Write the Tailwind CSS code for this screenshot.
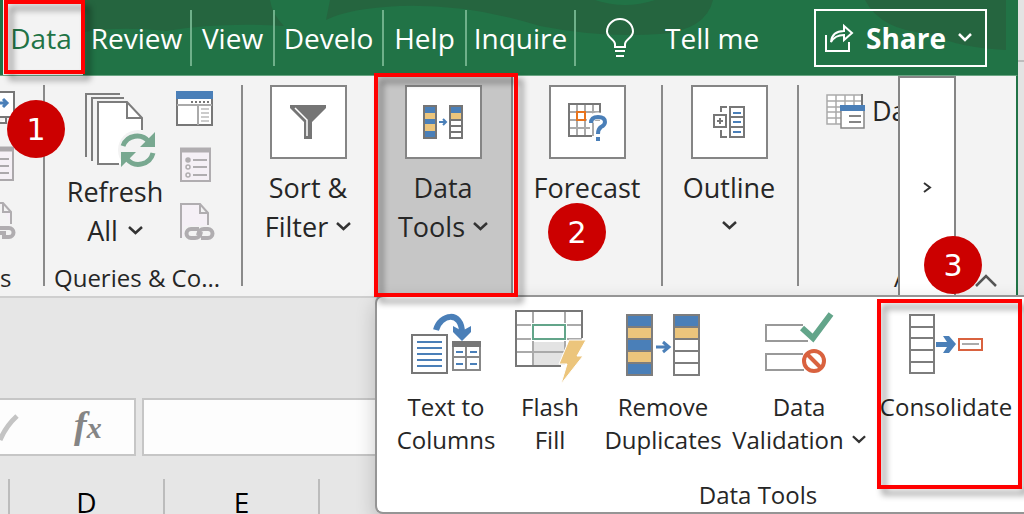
<!DOCTYPE html>
<html lang="en">

<head>
    <meta charset="UTF-8">
    <meta name="viewport" content="width=device-width, initial-scale=1.0">
    <title>Data Tools - Consolidate</title>
    <script src="https://cdn.jsdelivr.net/npm/@tailwindcss/browser@4"></script>
</head>

<body class="relative h-screen overflow-hidden bg-[#e6e6e6] font-['Open_Sans','Noto_Sans',sans-serif] text-[#262626]">
    <div class="flex">
        <div class="flex-1 min-w-0">
            <!-- Tab bar -->
            <header class="relative h-[75px] bg-[#217346] text-white text-[28px] leading-[40px]">
                <svg class="absolute inset-0 w-full h-full" viewBox="0 0 1018 75" preserveAspectRatio="none" fill="#25653f">
                    <path d="M84 0H270Q272 14 284 26Q220 22 166 31Q120 26 84 32Z" />
                    <path d="M330 0H595Q625 10 655 0H713Q706 30 660 34Q600 38 540 26Q470 4 400 6Q350 8 326 20Z" />
                    <path d="M865 0H1006V50Q960 48 930 34Q880 30 865 0Z" />
                </svg>
                <nav class="relative flex items-center h-full pl-[3px]">
                    <button class="w-[80px] h-full bg-[#f3f3f3] text-[#217346] pr-1">Data</button>
                    <button class="w-[109px] h-[56px] border-r-2 border-[#6fb08a]">Review</button>
                    <button class="w-[83px] h-[56px] border-r-2 border-[#6fb08a]">View</button>
                    <button class="w-[109px] h-[56px] border-r-2 border-[#6fb08a]">Develo</button>
                    <button class="w-[83px] h-[56px] border-r-2 border-[#6fb08a]">Help</button>
                    <button class="w-[109px] h-[56px] border-r-2 border-[#6fb08a]">Inquire</button>
                    <button class="flex items-center gap-[30px] ml-[29px]">
                        <svg class="w-[30px] h-[40px]" viewBox="0 0 30 40" fill="none" stroke="#fff" stroke-width="2">
                            <path d="M10 29V26C10 21 2 20 2 13.500A13 12.500 0 0 1 28 13.500C28 20 20 21 20 26V29ZM10 33H20M11 38H19" />
                        </svg>
                        <span>Tell me</span>
                    </button>
                    <button class="ml-auto mr-[31px] w-[173px] h-[58px] border-2 border-white flex items-center gap-[12px] pl-[9px] font-bold">
                        <svg class="w-[29px] h-[30px]" viewBox="0 0 29 30" fill="none" stroke="#fff" stroke-width="2">
                            <path d="M1 12V28H24V19M6 19Q7 8 19 8V3L27 10L19 17V12Q10 12 6 19Z" />
                        </svg>
                        <span>Share</span>
                        <svg class="w-[14px] h-[9px]" viewBox="0 0 14 9" fill="none" stroke="#fff" stroke-width="2.500">
                            <path d="M1 1L7 7L13 1" />
                        </svg>
                    </button>
                </nav>
            </header>

            <!-- Ribbon -->
            <main class="flex h-[223px] bg-[#f3f3f3] border-t border-t-[#6aa583] border-b-2 border-b-[#cfcfcf] border-r-2 border-r-[#217346] text-[27px] leading-[39px]">
                <section class="w-[43px] pt-[15px]">
                    <div class="flex flex-col gap-[20px]">
                        <svg class="w-[18px] h-[35px]" viewBox="0 0 18 35" fill="none" stroke="#777" stroke-width="2">
                            <path d="M0 1H14V26H0M0 32H6V27" fill="#fff" />
                            <path d="M0 12H7M3 8L7 12L3 16" stroke="#4a7fb8" stroke-width="3" />
                        </svg>
                        <svg class="w-[18px] h-[36px]" viewBox="0 0 18 36" fill="none" stroke="#aba8ab" stroke-width="2">
                            <path d="M0 2H13V34H0" fill="#f5f0f6" />
                            <path d="M0 3H14" stroke-width="5" />
                            <path d="M0 13H9M0 20H9M0 27H9" />
                        </svg>
                        <svg class="w-[18px] h-[38px]" viewBox="0 0 18 38" fill="none" stroke="#b0adb0" stroke-width="2">
                            <path d="M0 1H3L11 10V22M3 1V10H11" fill="#f5f0f6" />
                            <path d="M0 26H9A4 4 0 0 1 9 35H2M0 31H6" stroke-width="4" />
                        </svg>
                    </div>
                    <p class="mt-[22px] text-[24px] leading-[32px]">s</p>
                </section>
                <div class="w-[2px] h-[201px] mt-[9px] bg-[#8a8a8a]"></div>

                <section class="w-[196px] pt-[15px]">
                    <div class="flex h-[171px] pl-[10px]">
                        <button class="w-[120px] flex flex-col items-center">
                            <svg class="w-[72px] h-[76px] self-end mr-[18px]" viewBox="0 0 72 76" fill="none" stroke="#7d7d7d" stroke-width="2">
                                <path d="M1 66V3H35M7 70V7H39" />
                                <path d="M13 11H42L57 27V73H13Z" fill="#fff" stroke="none" />
                                <path d="M34 73H13V11H42L57 27V39M42 11V27H57" />
                                <circle cx="53" cy="59" r="20" fill="#f3f3f3" stroke="none" />
                                <g stroke="#78a890" stroke-width="5">
                                    <path d="M38 55A15 15 0 0 1 64 51M68 62A15 15 0 0 1 42 68" />
                                </g>
                                <path d="M70 41V56H55ZM36 76V61H51Z" fill="#78a890" stroke="none" />
                            </svg>
                            <span class="mt-[5px]">Refresh</span>
                            <span class="flex items-center gap-[10px]">All
                                <svg class="w-[15px] h-[9px]" viewBox="0 0 15 9" fill="none" stroke="#333" stroke-width="2.500">
                                    <path d="M1 1L7.500 7L14 1" />
                                </svg>
                            </span>
                        </button>
                        <div class="flex flex-col gap-[20px]">
                            <button aria-label="Queries pane">
                                <svg class="w-[38px] h-[36px]" viewBox="0 0 38 36" fill="none">
                                    <path d="M2 1H37V34H2Z" fill="#fff" stroke="#777" stroke-width="2" />
                                    <path d="M1 0H38V8H1Z" fill="#4a7fb8" />
                                    <path d="M2 14H37M23 14V34" stroke="#aaa" stroke-width="2" />
                                    <path d="M16 11H34" stroke="#777" stroke-width="2" stroke-dasharray="2 2" />
                                    <path d="M26 18H34M26 22H34M26 26H34M26 30H34" stroke="#999" />
                                </svg>
                            </button>
                            <button aria-label="Properties">
                                <svg class="w-[38px] h-[36px]" viewBox="0 0 38 36" fill="none" stroke="#b0adb0" stroke-width="2">
                                    <path d="M6 2H35V34H6Z" fill="#f5f0f6" />
                                    <path d="M5 3H36" stroke-width="5" />
                                    <path d="M18 13H32M18 20H32M18 28H32" />
                                    <g stroke-width="1.500">
                                        <circle cx="13" cy="13" r="2" fill="#b0adb0" />
                                        <circle cx="13" cy="20" r="2" />
                                        <circle cx="13" cy="28" r="2" />
                                    </g>
                                </svg>
                            </button>
                            <button aria-label="Edit links">
                                <svg class="w-[40px] h-[38px]" viewBox="0 0 40 38" fill="none" stroke="#b0adb0" stroke-width="2">
                                    <path d="M6 35V1H25L33 10V22M25 1V10H33" fill="#f5f0f6" />
                                    <path d="M9 23H40V38H9Z" fill="#f3f3f3" stroke="none" />
                                    <g stroke-width="4">
                                        <path d="M24 26H16A4.500 4.500 0 0 0 16 35H20Q25 35 26 29" />
                                        <path d="M26 35H33A4.500 4.500 0 0 0 33 26H29Q24 26 23 32" />
                                    </g>
                                </svg>
                            </button>
                        </div>
                    </div>
                    <p class="text-[24px] leading-[32px] pl-[9px] whitespace-nowrap">Queries &amp; Co...</p>
                </section>
                <div class="w-[2px] h-[201px] mt-[9px] bg-[#8a8a8a]"></div>

                <button class="w-[132px] pt-[9px] pr-[2px] flex flex-col items-center">
                    <span class="w-[77px] h-[74px] border-2 border-[#858585] bg-white flex items-center justify-center">
                        <svg class="w-[36px] h-[34px]" viewBox="0 0 36 34">
                            <path d="M0 0H36V3L22 17V34H14V17L0 3Z" fill="#757575" />
                            <path d="M5 3L17 15V31" stroke="#fff" stroke-width="1.500" fill="none" />
                        </svg>
                    </span>
                    <span class="mt-[9px]">Sort &amp;</span>
                    <span class="flex items-center gap-[8px]">Filter
                        <svg class="w-[15px] h-[9px]" viewBox="0 0 15 9" fill="none" stroke="#333" stroke-width="2.500">
                            <path d="M1 1L7.500 7L14 1" />
                        </svg>
                    </span>
                </button>

                <button class="w-[138px] pt-[9px] flex flex-col items-center bg-[#c6c6c6] border-r-2 border-[#858585]">
                    <span class="w-[77px] h-[74px] border-2 border-[#858585] bg-white flex items-center justify-center">
                        <svg class="w-[40px] h-[34px]" viewBox="0 0 40 34">
                            <path d="M0 0H14V34H0ZM26 0H40V34H26Z" fill="#757575" />
                            <path d="M2 2H12V8H2ZM2 14H12V19H2ZM2 26H12V32H2ZM28 2H38V8H28Z" fill="#4a7fb8" />
                            <path d="M2 8H12V14H2ZM2 19H12V26H2ZM28 8H38V14H28Z" fill="#ecc57c" />
                            <path d="M28 16H38V20H28ZM28 22H38V26H28ZM28 28H38V32H28Z" fill="#fff" />
                            <path d="M16 17H23M20 14L23 17L20 20" stroke="#4a7fb8" stroke-width="2" fill="none" />
                        </svg>
                    </span>
                    <span class="mt-[9px]">Data</span>
                    <span class="flex items-center gap-[8px]">Tools
                        <svg class="w-[15px] h-[9px]" viewBox="0 0 15 9" fill="none" stroke="#333" stroke-width="2.500">
                            <path d="M1 1L7.500 7L14 1" />
                        </svg>
                    </span>
                </button>

                <button class="w-[148px] pt-[9px] flex flex-col items-center">
                    <span class="w-[77px] h-[74px] border-2 border-[#858585] bg-white flex items-center justify-center">
                        <svg class="w-[39px] h-[38px]" viewBox="0 0 39 38" fill="none">
                            <path d="M1 9H32M1 17H32M1 25H22M9 1V33M17 1V33M25 1V33" stroke="#aaa" stroke-width="2" />
                            <path d="M32 11V1H1V33H24" stroke="#777" stroke-width="2" />
                            <path d="M9 9H17V17H9Z" stroke="#e8731c" stroke-width="2" />
                            <path d="M22 20Q22 13 30 13Q38 13 38 19Q38 24 30 26V38" stroke="#fff" stroke-width="7" />
                            <path d="M23 20Q23 14 30 14Q37 14 37 19Q37 22 33 24Q30 26 30 31M30 34V38" stroke="#4a7fb8" stroke-width="4" />
                        </svg>
                    </span>
                    <span class="mt-[9px]">Forecast</span>
                </button>
                <div class="w-[2px] h-[201px] mt-[9px] bg-[#8a8a8a]"></div>

                <button class="w-[134px] pt-[9px] pr-[2px] flex flex-col items-center">
                    <span class="w-[77px] h-[74px] border-2 border-[#858585] bg-white flex items-center justify-center">
                        <svg class="w-[32px] h-[32px]" viewBox="0 0 32 32" fill="none" stroke="#777" stroke-width="2">
                            <path d="M17 1H31V31H17ZM17 11H31M17 21H31M14 1H8V6M14 31H8V24M1 9H13V21H1ZM7 12V18M4 15H10" />
                            <path d="M20 7H28M20 16H28M20 26H28" stroke="#4a7fb8" />
                        </svg>
                    </span>
                    <span class="mt-[9px]">Outline</span>
                    <svg class="w-[15px] h-[9px] mt-[14px]" viewBox="0 0 15 9" fill="none" stroke="#333" stroke-width="2.500">
                        <path d="M1 1L7.500 7L14 1" />
                    </svg>
                </button>
                <div class="w-[2px] h-[201px] mt-[9px] bg-[#8a8a8a]"></div>

                <section class="flex-1 min-w-0 overflow-hidden whitespace-nowrap pt-[15px]">
                    <button class="flex items-center gap-[7px] pl-[27px]">
                        <svg class="shrink-0 w-[39px] h-[36px]" viewBox="0 0 39 36" fill="none" stroke="#aaa" stroke-width="1.500">
                            <path d="M1 2H36V31H1ZM1 8H36M1 14H36M1 19H36M1 25H36M10 2V31M19 2V31M28 2V31" fill="#fff" />
                            <path d="M36 1V12" stroke="#777" stroke-width="2" />
                            <path d="M15 13H38V35H15Z" fill="#fff" stroke="#858585" />
                            <path d="M14 12H39V18H14Z" fill="#4a7fb8" stroke="none" />
                            <path d="M23 23H35M23 29H35" stroke="#858585" stroke-width="2" />
                        </svg>
                        <span>Data</span>
                    </button>
                    <p class="mt-[132px] pl-[95px] text-[24px] leading-[32px]">A</p>
                </section>
                <button class="w-[58px] border-2 border-b-0 border-[#858585] bg-white flex items-center justify-center" aria-label="Scroll ribbon">
                    <svg class="w-[9px] h-[11px]" viewBox="0 0 9 11" fill="none" stroke="#333" stroke-width="2">
                        <path d="M1 1L7 5.500L1 10" />
                    </svg>
                </button>
                <button class="w-[60px] flex items-end justify-center pb-[9px]" aria-label="Collapse ribbon">
                    <svg class="w-[24px] h-[13px]" viewBox="0 0 24 13" fill="none" stroke="#555" stroke-width="2.500">
                        <path d="M2 12L12 2L22 12" />
                    </svg>
                </button>
            </main>
        </div>
        <!-- Window edge -->
        <div class="w-[6px] bg-[#e3e3e3]">
            <div class="h-[62px] border-b-2 border-[#bdbdbd]"></div>
        </div>
    </div>

    <!-- Formula bar -->
    <div class="mt-[100px] flex gap-[6px] h-[58px]">
        <div class="w-[136px] border-2 border-l-0 border-[#c6c6c6] bg-[#fdfdfd] flex items-center">
            <button aria-label="Enter">
                <svg class="w-[20px] h-[34px]" viewBox="0 0 20 34" fill="none" stroke="#c4c4c4" stroke-width="5">
                    <path d="M0 30Q6 16 17 6" />
                </svg>
            </button>
            <button class="ml-[54px] pb-[2px] font-['Liberation_Serif',serif] italic font-bold text-[#858585] text-[38px] leading-[40px]">f<span class="text-[30px]">x</span></button>
        </div>
        <input type="text" aria-label="Formula" class="flex-1 min-w-0 px-2 border-2 border-[#c6c6c6] bg-[#fdfdfd] outline-none">
    </div>

    <!-- Column headings -->
    <div class="mt-[23px] flex h-[35px] text-[28px] leading-[46px] text-black text-center">
        <div class="w-[10px] border-r-2 border-[#bcbcbc]"></div>
        <div class="w-[155px] border-r-2 border-[#bcbcbc]">D</div>
        <div class="w-[155px] border-r-2 border-[#bcbcbc]">E</div>
    </div>

    <!-- Data Tools menu -->
    <div class="absolute left-[375px] right-0 top-[295px] h-[219px] flex flex-col bg-white border-2 border-r-0 border-[#959595] rounded-l-lg shadow-[0_8px_20px_rgba(0,0,0,0.2)] text-[24px] leading-[33px]">
        <div class="flex pl-[11px] pt-[13px] h-[182px] items-start whitespace-nowrap">
            <button class="w-[116px] flex flex-col items-center">
                <svg class="w-[70px] h-[70px]" viewBox="0 0 70 70" fill="none">
                    <path d="M1 25H36V63H1Z" stroke="#777" stroke-width="2" />
                    <path d="M6 32H31M6 38H31M6 44H31M6 50H31M6 56H31" stroke="#4a7fb8" stroke-width="2" />
                    <path d="M42 33H69V60H42ZM42 47H69M55 33V60" stroke="#888" stroke-width="2" />
                    <path d="M41 31H70V37H41Z" fill="#777" />
                    <path d="M45 42H52M59 42H66M45 54H52M59 54H66" stroke="#4a7fb8" stroke-width="2" />
                    <path d="M25 20C29 4 51 0 51 23" stroke="#4a7fb8" stroke-width="6" />
                    <path d="M42 16L51 21L60 16V22L51 31L42 22Z" fill="#4a7fb8" />
                </svg>
                <span class="mt-[10px]">Text to</span>
                <span>Columns</span>
            </button>
            <button class="w-[92px] flex flex-col items-center">
                <svg class="w-[71px] h-[75px]" viewBox="0 0 71 75" fill="none">
                    <path d="M19 32H50V55H19Z" fill="#e3e3e3" />
                    <path d="M1 15H67M1 29H67M1 42H50M18 1V56M50 1V45" stroke="#aaa" stroke-width="2" />
                    <path d="M67 28V1H1V56H46" stroke="#777" stroke-width="2" />
                    <path d="M16 13H52V31H16Z" fill="#fff" />
                    <path d="M18 15H50V29H18Z" stroke="#63a58a" stroke-width="2" />
                    <path d="M54 30H71L62 46H68L46 74L52 54H44Z" fill="#ecc57c" stroke="#fff" stroke-width="1" />
                </svg>
                <span class="mt-[5px]">Flash</span>
                <span>Fill</span>
            </button>
            <button class="w-[134px] flex flex-col items-center">
                <svg class="w-[74px] h-[70px]" viewBox="0 0 74 70" fill="none">
                    <path d="M1 5H26V17H1ZM1 29H26V41H1ZM1 53H26V65H1ZM48 5H73V17H48Z" fill="#4a7fb8" />
                    <path d="M1 17H26V29H1ZM1 41H26V53H1ZM48 17H73V29H48Z" fill="#ecc57c" />
                    <path d="M1 5H26V65H1ZM48 5H73V65H48ZM1 17H26M1 29H26M1 41H26M1 53H26M48 17H73M48 29H73M48 41H73M48 53H73" stroke="#7d7d7d" stroke-width="2" />
                    <path d="M30 37H43M37 32L43 37L37 42" stroke="#4a7fb8" stroke-width="3" />
                </svg>
                <span class="mt-[10px]">Remove</span>
                <span>Duplicates</span>
            </button>
            <button class="w-[138px] flex flex-col items-center">
                <svg class="w-[69px] h-[70px]" viewBox="0 0 69 70" fill="none">
                    <path d="M38 15H1V31H43M38 44H1V60H39" stroke="#999" stroke-width="2" />
                    <path d="M37 18L48 28L66 4" stroke="#63a58a" stroke-width="6" />
                    <circle cx="49" cy="51" r="10" fill="#fff" stroke="#d9623f" stroke-width="4" />
                    <path d="M42 44L56 58" stroke="#d9623f" stroke-width="4" />
                </svg>
                <span class="mt-[10px]">Data</span>
                <span class="flex items-center gap-[8px]">Validation
                    <svg class="w-[14px] h-[9px]" viewBox="0 0 15 9" fill="none" stroke="#333" stroke-width="2.500">
                        <path d="M1 1L7.500 7L14 1" />
                    </svg>
                </span>
            </button>
            <button class="ml-[10px] w-[136px] flex flex-col items-center">
                <svg class="w-[74px] h-[70px]" viewBox="0 0 74 70" fill="none">
                    <path d="M1 5H25V63H1ZM1 17H25M1 28H25M1 40H25M1 52H25" stroke="#7d7d7d" stroke-width="2" />
                    <path d="M27 32H38L34 26H40L47 34L40 43H34L38 37H27Z" fill="#4a7fb8" />
                    <path d="M50 29H73V40H50Z" stroke="#d9623f" stroke-width="2" />
                    <path d="M53 34H70" stroke="#aaa" stroke-width="2" />
                </svg>
                <span class="mt-[10px]">Consolidate</span>
            </button>
        </div>
        <p class="text-center pl-[115px] leading-[32px]">Data Tools</p>
    </div>

    <!-- Step markers -->
    <div class="absolute left-[4px] top-0 w-[81px] h-[74px] border-4 border-[#f00] drop-shadow-[5px_6px_3px_rgba(0,0,0,0.4)]"></div>
    <div class="absolute left-[374px] top-[73px] w-[144px] h-[224px] border-4 border-[#f00] drop-shadow-[5px_6px_3px_rgba(0,0,0,0.4)]"></div>
    <div class="absolute left-[877px] top-[299px] w-[145px] h-[190px] border-4 border-[#f00] drop-shadow-[5px_6px_3px_rgba(0,0,0,0.4)]"></div>
    <div class="absolute left-[7px] top-[100px] size-[58px] rounded-full bg-[#c00] text-white font-['DejaVu_Sans',sans-serif] text-[30px] flex items-center justify-center">1</div>
    <div class="absolute left-[548px] top-[203px] size-[58px] rounded-full bg-[#c00] text-white font-['DejaVu_Sans',sans-serif] text-[30px] flex items-center justify-center">2</div>
    <div class="absolute left-[924px] top-[236px] size-[58px] rounded-full bg-[#c00] text-white font-['DejaVu_Sans',sans-serif] text-[30px] flex items-center justify-center">3</div>
</body>

</html>
